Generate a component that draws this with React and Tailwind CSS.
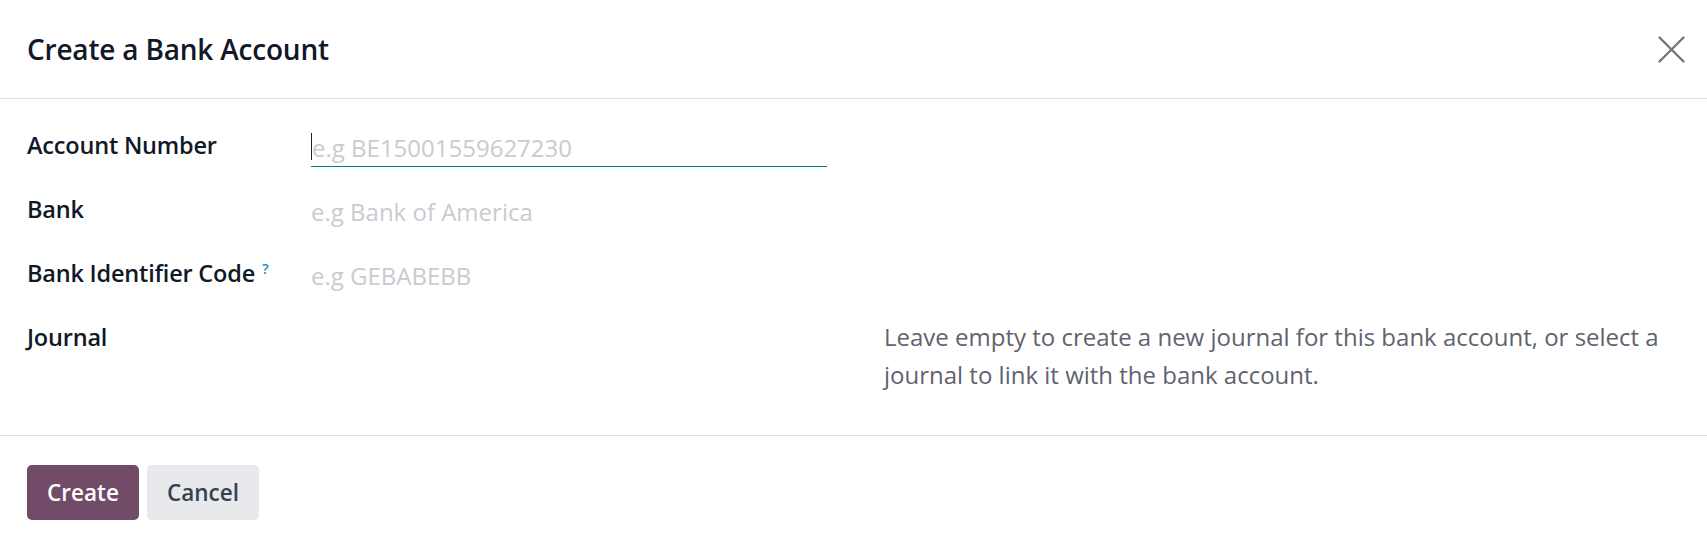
import React from 'react';

const Field = ({ label, help, children }) => (
    <div className="flex h-[64px] items-start">
        <div className="w-[284px] shrink-0 text-[23.5px] leading-[32px] font-semibold text-[#111827] tracking-[-0.2px]">
            {label}
            {help && <sup className="ml-[7px] text-[15px] font-semibold text-[#2a8cc4] relative -top-[8px]">?</sup>}
        </div>
        {children}
    </div>
);

const App = () => {
    return (
        <div className="w-[1707px] h-[546px] bg-white flex flex-col font-['Open_Sans','Lato',sans-serif]">
            <div className="h-[99px] shrink-0 border-b border-[#dee2e6] flex items-center justify-between pl-[27px] pr-[22px]">
                <h4 className="text-[28px] font-semibold text-[#111827] leading-none tracking-[-0.2px]">Create a Bank Account</h4>
                <button className="w-[27px] h-[27px] flex items-center justify-center text-[#777777]" title="Close">
                    <svg width="27" height="27" viewBox="0 0 27 27" fill="none" stroke="currentColor" strokeWidth="2.4" strokeLinecap="round">
                        <path d="M1.5 1.5 L25.5 25.5" />
                        <path d="M25.5 1.5 L1.5 25.5" />
                    </svg>
                </button>
            </div>

            <div className="h-[337px] shrink-0 border-b border-[#dee2e6] pl-[27px] pt-[30px]">
                <Field label="Account Number">
                    <div className="w-[516px] h-[38px] border-b border-[#017e84] flex items-center relative">
                        <span className="absolute left-0 top-[4px] w-px h-[27px] bg-[#222]" />
                        <span className="text-[24px] text-[#c9cbd0] pl-[1px]">e.g BE15001559627230</span>
                    </div>
                </Field>
                <Field label="Bank">
                    <div className="w-[516px] h-[38px] flex items-center">
                        <span className="text-[24px] text-[#c9cbd0]">e.g Bank of America</span>
                    </div>
                </Field>
                <Field label="Bank Identifier Code" help>
                    <div className="w-[516px] h-[38px] flex items-center">
                        <span className="text-[24px] text-[#c9cbd0]">e.g GEBABEBB</span>
                    </div>
                </Field>
                <div className="flex items-start">
                    <div className="w-[284px] shrink-0 text-[23.5px] leading-[32px] font-semibold text-[#111827] tracking-[-0.2px]">Journal</div>
                    <div className="w-[573px] shrink-0" />
                    <p className="w-[796px] text-[24px] leading-[38px] text-[#5f636f] -mt-[3px]">
                        Leave empty to create a new journal for this bank account, or select a journal to link it with the bank account.
                    </p>
                </div>
            </div>

            <div className="flex gap-2 pl-[27px] pt-[29px]">
                <button className="h-[55px] w-[112px] rounded-[5px] bg-[#714b67] text-white text-[22.5px] font-semibold">Create</button>
                <button className="h-[55px] w-[112px] rounded-[5px] bg-[#e7e9ed] text-[#374151] text-[22.5px] font-semibold">Cancel</button>
            </div>
        </div>
    );
};

export default App;
